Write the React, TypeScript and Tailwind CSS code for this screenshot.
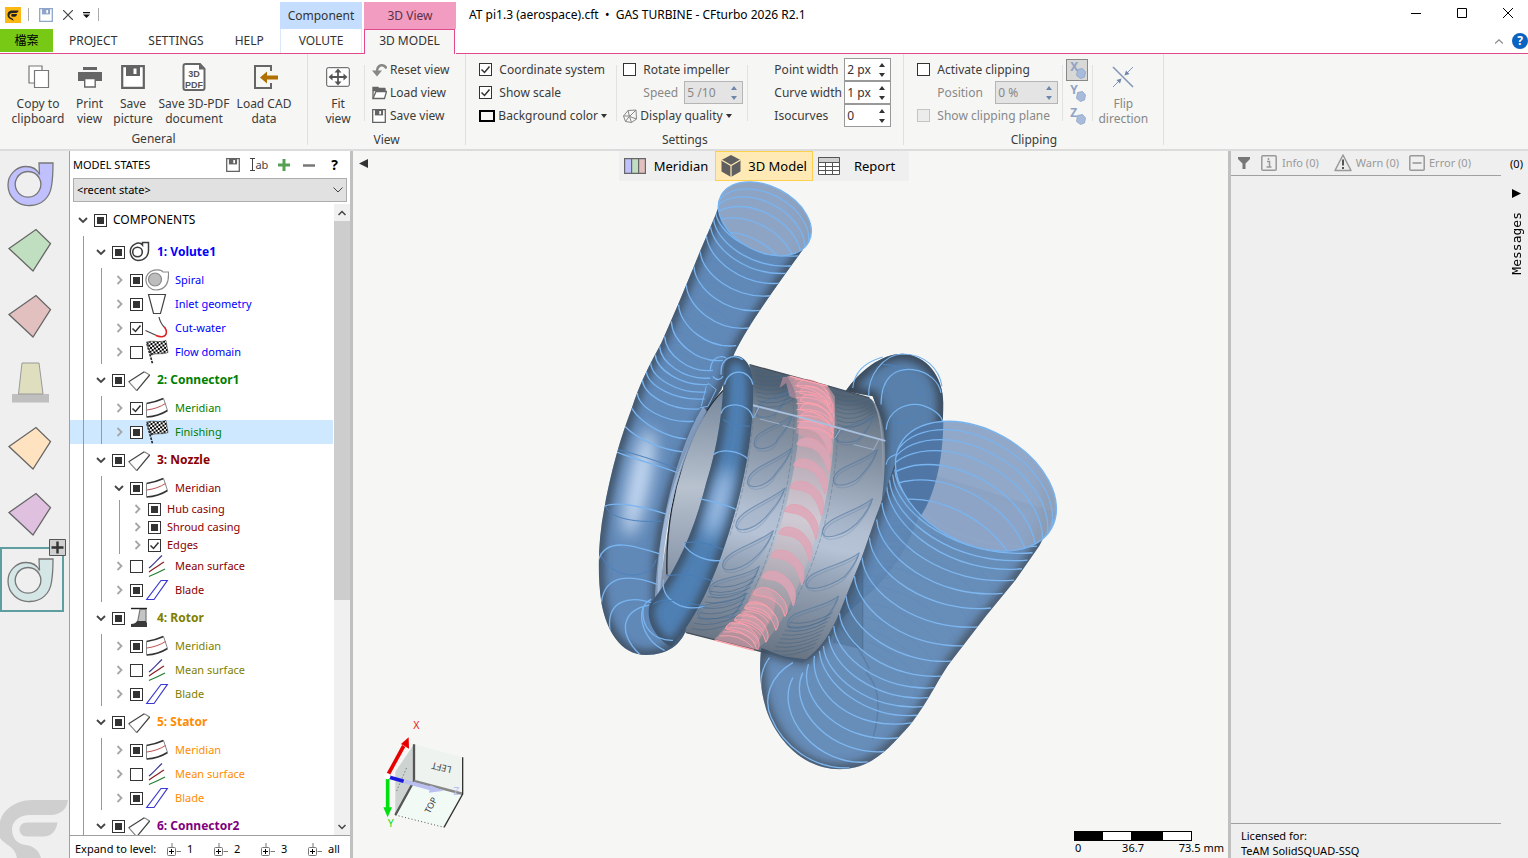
import type { ReactNode } from 'react'
import { clsx } from 'clsx'

type CheckState = 'on' | 'off' | 'mixed'
type IconName = 'volute' | 'kite' | 'rotor' | 'spiral' | 'inlet' | 'cutwater' | 'flag' | 'meridian' | 'mean' | 'blade'

interface TreeRow {
  level: 0 | 1 | 2 | 3
  label: string
  state: CheckState
  color: string
  icon?: IconName
  open?: boolean
  selected?: boolean
}

const rows: TreeRow[] = [
  { level: 0, label: 'COMPONENTS', state: 'mixed', color: 'text-black', open: true },
  { level: 1, label: '1: Volute1', state: 'mixed', color: 'text-[#0000ff]', icon: 'volute', open: true },
  { level: 2, label: 'Spiral', state: 'mixed', color: 'text-[#0000ff]', icon: 'spiral' },
  { level: 2, label: 'Inlet geometry', state: 'mixed', color: 'text-[#0000ff]', icon: 'inlet' },
  { level: 2, label: 'Cut-water', state: 'on', color: 'text-[#0000ff]', icon: 'cutwater' },
  { level: 2, label: 'Flow domain', state: 'off', color: 'text-[#0000ff]', icon: 'flag' },
  { level: 1, label: '2: Connector1', state: 'mixed', color: 'text-[#008000]', icon: 'kite', open: true },
  { level: 2, label: 'Meridian', state: 'on', color: 'text-[#008000]', icon: 'meridian' },
  { level: 2, label: 'Finishing', state: 'mixed', color: 'text-[#008000]', icon: 'flag', selected: true },
  { level: 1, label: '3: Nozzle', state: 'mixed', color: 'text-[#8b0000]', icon: 'kite', open: true },
  { level: 2, label: 'Meridian', state: 'mixed', color: 'text-[#8b0000]', icon: 'meridian', open: true },
  { level: 3, label: 'Hub casing', state: 'mixed', color: 'text-[#8b0000]' },
  { level: 3, label: 'Shroud casing', state: 'mixed', color: 'text-[#8b0000]' },
  { level: 3, label: 'Edges', state: 'on', color: 'text-[#8b0000]' },
  { level: 2, label: 'Mean surface', state: 'off', color: 'text-[#8b0000]', icon: 'mean' },
  { level: 2, label: 'Blade', state: 'mixed', color: 'text-[#8b0000]', icon: 'blade' },
  { level: 1, label: '4: Rotor', state: 'mixed', color: 'text-[#808000]', icon: 'rotor', open: true },
  { level: 2, label: 'Meridian', state: 'mixed', color: 'text-[#808000]', icon: 'meridian' },
  { level: 2, label: 'Mean surface', state: 'off', color: 'text-[#808000]', icon: 'mean' },
  { level: 2, label: 'Blade', state: 'mixed', color: 'text-[#808000]', icon: 'blade' },
  { level: 1, label: '5: Stator', state: 'mixed', color: 'text-[#ff8c00]', icon: 'kite', open: true },
  { level: 2, label: 'Meridian', state: 'mixed', color: 'text-[#ff8c00]', icon: 'meridian' },
  { level: 2, label: 'Mean surface', state: 'off', color: 'text-[#ff8c00]', icon: 'mean' },
  { level: 2, label: 'Blade', state: 'mixed', color: 'text-[#ff8c00]', icon: 'blade' },
  { level: 1, label: '6: Connector2', state: 'mixed', color: 'text-[#800080]', icon: 'kite', open: true }
]

/* ---------- icons ---------- */

function Floppy({ className, color = '#636363' }: { className?: string; color?: string }) {
  return (
    <svg viewBox="0 0 24 24" className={className}>
      <path d="M1.200 1.200h21.600v21.600H1.200z" fill="#fff" stroke={color} strokeWidth="2.200" />
      <path d="M5 1h14v10H5z" fill={color} />
      <path d="M12.500 3.500h3v5.500h-3z" fill="#fff" />
    </svg>
  )
}

function TreeIcon({ name }: { name: IconName }) {
  return (
    <svg viewBox="0 0 24 24" className="w-6 h-6" fill="none" stroke="#444" strokeWidth="1.2">
      {name === 'volute' && (
        <g stroke="#3c3c3c">
          <path d="M21.500 2.500v8c0 6-4.500 10-10.500 10A8.800 8.800 0 0 1 7.500 4.300C11 2.500 14 3 15.500 5V2.500z" strokeWidth="1.500" />
          <circle cx="10.500" cy="12" r="4.800" strokeWidth="1.600" />
        </g>
      )}
      {name === 'spiral' && (
        <g stroke="#8a8a8a">
          <path d="M23.500 4c.5 9-1.500 18-13 18A10 10 0 0 1 9 2.200C13 1.500 17 2 18 4z" />
          <circle cx="10" cy="11.500" r="6.500" fill="#bdbdbd" />
        </g>
      )}
      {name === 'inlet' && <path d="M3.500 2.500h17l-5 19h-7z" />}
      {name === 'cutwater' && (
        <g>
          <path d="M14 1c1 5 3 8 6 11M.5 14.500l11 5" />
          <path d="M19.500 11c3 4 2.500 8.500-1.500 9.500-2 .5-4.500 0-7-1" stroke="#e02020" strokeWidth="1.500" />
        </g>
      )}
      {name === 'flag' && (
        <g>
          <pattern id="checker" width="4" height="4" patternUnits="userSpaceOnUse" patternTransform="rotate(8)">
            <path d="M0 0h4v4H0z" fill="#fff" stroke="none" />
            <path d="M0 0h2v2H0zM2 2h2v2H2z" fill="#000" stroke="none" />
          </pattern>
          <path d="M2 4l5.500 19.500" stroke="#222" strokeDasharray="2.500 1" strokeWidth="1.600" />
          <path d="M1.500 2C8 0 14 3 21 .5l2 12c-6 2.500-11 0-17 2.500z" fill="url(#checker)" stroke="#333" strokeWidth=".6" />
        </g>
      )}
      {name === 'kite' && (
        <g>
          <path d="M17.300 3.700l5.400 3.300M9.700 22.700l-8-9" stroke="#888" />
          <path d="M1.700 13.700l15.600-10M22.700 7l-13 15.700" stroke="#444" />
        </g>
      )}
      {name === 'rotor' && (
        <g stroke="none">
          <path d="M4 2.500h16" stroke="#222" strokeWidth="1.400" />
          <path d="M13 3.500h6v13h-8.500z" fill="#c4c4c4" stroke="#777" />
          <path d="M10 15h9v1.500h1V21H4v-3c3 0 5-1 6-3z" fill="#3a3a3a" />
        </g>
      )}
      {name === 'meridian' && (
        <g>
          <path d="M1.500 7.500C8 6.500 14 4.500 18.500 2.500" stroke="#333" strokeWidth="1.600" />
          <path d="M1.500 21C9 20.500 17 18 22.500 14.500" stroke="#333" strokeWidth="1.600" />
          <path d="M1.500 7.500V21M18.500 2.500l4 12" stroke="#888" strokeWidth="1" />
          <path d="M2 14c7-1 13-3 18.500-6.500" stroke="#c05050" strokeWidth="1" />
        </g>
      )}
      {name === 'mean' && (
        <g strokeWidth="1.200">
          <path d="M4 14C9 10 13 5 17 1.500" stroke="#3a3a9a" />
          <path d="M4 18c6-4 10-7 15-10" stroke="#8b2020" />
          <path d="M4 22.500C10 20 14 18 20 15" stroke="#208030" />
        </g>
      )}
      {name === 'blade' && <path d="M1.700 21.500H9L22.300 2.500H16z" stroke="#3a3ad0" strokeWidth="1.200" />}
    </svg>
  )
}

function Volute({ fill }: { fill: string }) {
  return (
    <svg viewBox="0 0 50 50" className="w-[50px] h-[50px]" stroke="#777" strokeWidth="1.300">
      <path
        fillRule="evenodd"
        fill={fill}
        d="M34 4h14c0 8 0 14-1.500 23C45 38 37 46.500 25 46.500A20.500 20.500 0 0 1 3 26C3 15 12 7.500 21 7.500c6 0 11 2.500 13.500 8zM23 12.500a12.800 12.800 0 1 0 .1 0z"
      />
    </svg>
  )
}

function Kite({ fill }: { fill: string }) {
  return (
    <svg viewBox="0 0 50 50" className="w-[50px] h-[50px]" stroke="#666" strokeWidth="1.300">
      <path d="M4 23.500L31 4.500l14.500 14L28 46z" fill={fill} />
    </svg>
  )
}

/* ---------- small controls ---------- */

function Check({ state, label, disabled, id }: { state: CheckState; label?: string; disabled?: boolean; id?: string }) {
  return (
    <span className="relative block w-[13px] h-[13px] shrink-0">
      <input
        id={id}
        type="checkbox"
        aria-label={label}
        defaultChecked={state !== 'off'}
        disabled={disabled}
        className={clsx(
          'block appearance-none w-[13px] h-[13px] border',
          disabled ? 'border-[#c4c4c4] bg-[#ececec]' : 'border-[#333] bg-white'
        )}
      />
      {state === 'mixed' && <span className="absolute inset-[3px] bg-[#333] pointer-events-none" />}
      {state === 'on' && (
        <svg viewBox="0 0 13 13" className="absolute inset-0 pointer-events-none" fill="none" stroke="#333" strokeWidth="1.500">
          <path d="M2.500 6.500l3 3 5-6" />
        </svg>
      )}
    </span>
  )
}

function CheckRow({ id, label, checked, disabled }: { id: string; label: string; checked?: boolean; disabled?: boolean }) {
  return (
    <div className="flex items-center gap-[7px] h-[23px]">
      <Check id={id} state={checked ? 'on' : 'off'} disabled={disabled} />
      <label htmlFor={id} className={clsx('whitespace-nowrap', disabled && 'text-[#888]')}>{label}</label>
    </div>
  )
}

function Spin({ id, value, width, disabled }: { id: string; value: string; width: string; disabled?: boolean }) {
  return (
    <span
      className={clsx(
        'flex items-center h-[23px] border',
        width,
        disabled ? 'border-[#b5b5b5] bg-[#e4e4e4] text-[#888]' : 'border-[#999] bg-white text-[#333]'
      )}
    >
      <input id={id} defaultValue={value} disabled={disabled} className="min-w-0 flex-1 pl-[2px] bg-transparent outline-none" />
      <span className={clsx('flex flex-col gap-[6px] pr-[5px]', disabled ? 'text-[#6f87ab]' : 'text-[#333]')}>
        <button aria-label={`Increase ${id}`} className="block" disabled={disabled}>
          <svg viewBox="0 0 6 4" className="w-[6px] h-1"><path d="M0 4l3-4 3 4z" fill="currentColor" /></svg>
        </button>
        <button aria-label={`Decrease ${id}`} className="block" disabled={disabled}>
          <svg viewBox="0 0 6 4" className="w-[6px] h-1"><path d="M0 0l3 4 3-4z" fill="currentColor" /></svg>
        </button>
      </span>
    </span>
  )
}

function BigButton({ icon, lines, width, disabled }: { icon: ReactNode; lines: string[]; width: string; disabled?: boolean }) {
  return (
    <button className={clsx('flex flex-col items-center', width, disabled && 'text-[#888]')}>
      <span className="flex items-center justify-center h-[38px]">{icon}</span>
      {lines.map(line => (
        <span key={line} className="leading-[15px] whitespace-nowrap">{line}</span>
      ))}
    </button>
  )
}

function SmallButton({ icon, label, menu }: { icon: ReactNode; label: string; menu?: boolean }) {
  return (
    <button className="flex items-center gap-[3px] h-[23px] whitespace-nowrap">
      {icon}
      {label}
      {menu && <svg viewBox="0 0 6 4" className="w-[6px] h-1"><path d="M0 0l3 4 3-4z" fill="#333" /></svg>}
    </button>
  )
}

function Group({ title, children }: { title: string; children: ReactNode }) {
  return (
    <section className="flex flex-col pt-1 border-r border-[#e0e0e0] mb-1">
      <div className="flex h-[69px]">{children}</div>
      <h2 className="mt-[3px] text-center leading-5">{title}</h2>
    </section>
  )
}

const Divider = () => <span className="w-px h-[56px] mt-[7px] bg-[#e2e2e2]" />

/* ---------- header ---------- */

function Header() {
  return (
    <header className="flex bg-white text-[#333]">
      <div className="flex flex-col w-[280px] border-b border-[#e0498c]">
        <div className="flex items-center h-[29px] pl-[5px]">
          <svg viewBox="0 0 16 16" className="w-4 h-4">
            <path d="M0 0h16v16H0z" fill="#fdb813" />
            <path d="M13.500 3.500H7.500C4 3.500 2.500 5.500 2.500 8c0 2.500 2 4 4 4.500l2 1.500c0-1.500-.5-2.500-2-3C5 10.500 4.500 9.500 4.500 8.500 4.500 7 5.500 6 7.500 6H11c1.500 0 2.300-1 2.500-2.500z" fill="#222" />
            <path d="M12 7H7.500c-1.800 0-1.800 2.700 0 2.700h2C11 9.700 11.800 8.500 12 7z" fill="#222" />
          </svg>
          <span className="w-px h-[13px] ml-[7px] bg-[#aaa]" />
          <button aria-label="Save" className="ml-[10px]"><Floppy className="w-[14px] h-[14px]" color="#8ea4c8" /></button>
          <button aria-label="Discard" className="ml-[10px]">
            <svg viewBox="0 0 10 10" className="w-[10px] h-[10px]" stroke="#444" strokeWidth="1.200"><path d="M0 0l10 10M10 0L0 10" /></svg>
          </button>
          <button aria-label="Customize quick access" className="ml-[10px]">
            <svg viewBox="0 0 7 6" className="w-[7px] h-[6px]"><path d="M0 0h7v1.200H0zM0 2.500h7L3.500 6z" fill="#111" /></svg>
          </button>
          <span className="w-px h-[13px] ml-2 bg-[#aaa]" />
        </div>
        <nav className="flex h-6">
          <button className="w-[53px] h-[23px] shrink-0 bg-[#77c916] text-black">檔案</button>
          <button className="pl-4 pr-[15px]">PROJECT</button>
          <button className="px-4">SETTINGS</button>
          <button className="pl-[15px]">HELP</button>
        </nav>
      </div>

      <div className="flex flex-col w-[84px] pt-[2px] border-b border-[#e0498c]">
        <div className="flex items-center justify-center h-[27px] mr-[2px] bg-[#c5deff]">Component</div>
        <button className="h-6 mr-[2px] border-x border-[#dbe8fa]">VOLUTE</button>
      </div>

      <div className="flex flex-col w-[92px] pt-[2px]">
        <div className="flex items-center justify-center h-[27px] bg-[#f19cc0] text-[#5c3046]">3D View</div>
        <button className="h-[25px] mr-px pb-[2px] border-x border-t border-[#e0498c] bg-[#f6f6f4]">3D MODEL</button>
      </div>

      <div className="flex flex-col flex-1 border-b border-[#e0498c]">
        <div className="flex items-center h-[29px] pl-[13px]">
          <h1 className="text-black whitespace-nowrap">AT pi1.3 (aerospace).cft&nbsp; • &nbsp;GAS TURBINE - CFturbo 2026 R2.1</h1>
          <div className="flex items-center gap-9 ml-auto pr-[15px] mb-[3px]">
            <button aria-label="Minimize"><svg viewBox="0 0 10 10" className="w-[10px] h-[10px]"><path d="M0 5h10v1H0z" fill="#000" /></svg></button>
            <button aria-label="Maximize"><svg viewBox="0 0 10 10" className="w-[10px] h-[10px]" fill="none" stroke="#000"><path d="M.5.5h9v9h-9z" /></svg></button>
            <button aria-label="Close"><svg viewBox="0 0 10 10" className="w-[10px] h-[10px]" stroke="#000"><path d="M0 0l10 10M10 0L0 10" /></svg></button>
          </div>
        </div>
        <div className="flex items-center justify-end gap-[9px] h-6">
          <button aria-label="Collapse ribbon">
            <svg viewBox="0 0 8 5" className="w-2 h-[5px]" fill="none" stroke="#888" strokeWidth="1.200"><path d="M0 4.500L4 .8l4 3.700" /></svg>
          </button>
          <button aria-label="Help" className="flex items-center justify-center w-4 h-4 rounded-full bg-[#0a63c0] text-white font-bold leading-4">?</button>
        </div>
      </div>
    </header>
  )
}

/* ---------- ribbon ---------- */

function AxisButton({ axis, active }: { axis: string; active?: boolean }) {
  return (
    <button
      aria-label={`Clip ${axis}`}
      className={clsx('relative w-[22px] h-[22px] mb-px border', active ? 'border-[#888] bg-[#d8d8d6]' : 'border-transparent')}
    >
      <span className="absolute left-[3px] top-0 text-[12px] leading-[14px] font-bold text-[#90a3c4]">{axis}</span>
      <svg viewBox="0 0 20 20" className="w-5 h-5">
        <path d="M10.500 9.500l5-1 3 3.500-1 5-4 1.500-4-3z" fill="#a9bbdb" stroke="#8fa3c8" strokeWidth=".8" />
      </svg>
    </button>
  )
}

function Ribbon() {
  return (
    <div className="flex shrink-0 h-[97px] bg-[#f6f6f4] border-b-2 border-[#dcdcdc] text-[#3b3b3b]">
      <Group title="General">
        <div className="flex pl-2 pr-3">
          <BigButton width="w-[60px]" lines={['Copy to', 'clipboard']} icon={
            <svg viewBox="0 0 22 24" className="w-[22px] h-6 ml-[2px]" fill="#fff" stroke="#777" strokeWidth="1.200"><path d="M1 1h13v17H1z" /><path d="M6.500 5.500h14v17h-14z" /></svg>
          } />
          <BigButton width="w-[43px]" lines={['Print', 'view']} icon={
            <svg viewBox="0 0 24 22" className="w-6 h-[22px]"><path d="M5 1h14v3H5zM0 6h24v9H0z" fill="#666" /><path d="M6.700 12.500h10.500v8.500H6.700z" fill="#fff" stroke="#666" strokeWidth="1.400" /></svg>
          } />
          <BigButton width="w-11" lines={['Save', 'picture']} icon={<Floppy className="w-6 h-6" />} />
          <BigButton width="w-[78px]" lines={['Save 3D-PDF', 'document']} icon={
            <svg viewBox="0 0 24 28" className="w-6 h-7 font-['Liberation_Sans',sans-serif]">
              <path d="M1.500 3q0-2 2-2H18l4.500 5v19q0 2-2 2h-17q-2 0-2-2z" fill="#fff" stroke="#666" strokeWidth="2" />
              <path d="M17 1v5.500h5" fill="#666" />
              <text x="12" y="13.500" fontSize="9" fontWeight="bold" textAnchor="middle" fill="#555">3D</text>
              <text x="12" y="24.500" fontSize="9" fontWeight="bold" textAnchor="middle" fill="#555">PDF</text>
            </svg>
          } />
          <BigButton width="w-[62px]" lines={['Load CAD', 'data']} icon={
            <svg viewBox="0 0 24 24" className="w-6 h-6 ml-1"><path d="M17 6V1H1v22h16v-5" fill="none" stroke="#666" strokeWidth="2" /><path d="M6 12.500l7-6v4h11v4H13v4z" fill="#b07000" /></svg>
          } />
        </div>
      </Group>

      <Group title="View">
        <div className="flex pl-1">
          <BigButton width="w-[52px]" lines={['Fit', 'view']} icon={
            <svg viewBox="0 0 24 20" className="w-6 h-5" fill="none" stroke="#555"><rect x=".7" y=".7" width="22.600" height="18.600" rx="1.500" fill="#fff" /><path d="M12 4v12M4.500 10h15" strokeWidth="1.800" /><path d="M12 1.500l3.500 4h-7zM12 18.500l3.500-4h-7zM2.500 10l4-3.500v7zM21.500 10l-4-3.500v7z" fill="#555" stroke="none" /></svg>
          } />
          <Divider />
          <div className="pl-[7px] pr-4">
            <SmallButton label="Reset view" icon={
              <svg viewBox="0 0 15 14" className="w-[15px] h-[14px]"><path d="M14.500 5.500C12.500.5 5.500 1 5 8v2" fill="none" stroke="#888" strokeWidth="2.500" /><path d="M0 7.500h10L5 13.500z" fill="#888" /></svg>
            } />
            <SmallButton label="Load view" icon={
              <svg viewBox="0 0 15 14" className="w-[15px] h-[14px]" fill="none" stroke="#666" strokeWidth="1.300"><path d="M1 12.500v-11h5l1 1.500h6v2" /><path d="M1.500 2.500h11v2h-11z" fill="#666" /><path d="M1 12.500l3-7h10.500l-2 7z" fill="#fff" /></svg>
            } />
            <SmallButton label="Save view" icon={<Floppy className="w-[14px] h-[14px] mr-px" />} />
          </div>
        </div>
      </Group>

      <Group title="Settings">
        <div className="pl-[13px] w-[150px]">
          <CheckRow id="coords" label="Coordinate system" checked />
          <CheckRow id="scale" label="Show scale" checked />
          <SmallButton menu label="Background color" icon={<span className="w-4 h-3 border-2 border-black bg-[#f6f6f4]" />} />
        </div>
        <Divider />
        <div className="pl-[6px] w-[130px]">
          <CheckRow id="rotate" label="Rotate impeller" />
          <div className="flex items-center justify-between pl-5 pr-1 h-[23px]">
            <label htmlFor="speed" className="text-[#888]">Speed</label>
            <Spin id="speed" value="5 /10" width="w-[59px]" disabled />
          </div>
          <SmallButton menu label="Display quality" icon={
            <svg viewBox="0 0 14 14" className="w-[14px] h-[14px]" fill="none" stroke="#888"><path d="M.5 7L5 1.500l8-.5.5 9-5 3.500-6-1zM5 1.500l1.500 6 7 2.500M.5 7h6l-4 5.500M13 1L6.500 7.500l2 6" /></svg>
          } />
        </div>
        <Divider />
        <div className="pl-[26px] pr-3">
          {[
            ['Point width', '2 px'],
            ['Curve width', '1 px'],
            ['Isocurves', '0']
          ].map(([label, value]) => (
            <div key={label} className="flex items-center h-[23px]">
              <label htmlFor={label} className="w-[70px] whitespace-nowrap">{label}</label>
              <Spin id={label} value={value} width="w-[47px]" />
            </div>
          ))}
        </div>
      </Group>

      <Group title="Clipping">
        <div className="pl-[13px] w-[158px]">
          <CheckRow id="clip" label="Activate clipping" />
          <div className="flex items-center justify-between pl-5 pr-1 h-[23px]">
            <label htmlFor="position" className="text-[#888]">Position</label>
            <Spin id="position" value="0 %" width="w-[63px]" disabled />
          </div>
          <CheckRow id="plane" label="Show clipping plane" disabled />
        </div>
        <Divider />
        <div className="flex flex-col pl-[3px] pr-1 pt-px">
          <AxisButton axis="X" active />
          <AxisButton axis="Y" />
          <AxisButton axis="Z" />
        </div>
        <Divider />
        <BigButton disabled width="w-[60px]" lines={['Flip', 'direction']} icon={
          <svg viewBox="0 0 22 22" className="w-[22px] h-[22px]" stroke="#8296b8" fill="#6f87ab"><path d="M1 1l20 20" strokeWidth="1.600" /><path d="M21 1l-6 6M1 21l6-6" /><path d="M12.500 9.500l1.500-5 3.500 3.500zM9.500 12.500l-1.500 5L4.500 14z" stroke="none" /></svg>
        } />
        <span className="w-[10px]" />
      </Group>
    </div>
  )
}

/* ---------- left side ---------- */

function ComponentBar() {
  const cell = 'flex items-center justify-center w-[60px] h-[66px] shrink-0'
  return (
    <aside className="relative flex flex-col w-[70px] shrink-0 bg-[#efefef] border-r border-[#a0a0a0] overflow-hidden">
      <button aria-label="Volute" className={cell}><Volute fill="#c0c0ff" /></button>
      <button aria-label="Connector" className={cell}><Kite fill="#c0dfc0" /></button>
      <button aria-label="Nozzle" className={cell}><Kite fill="#e2c0c0" /></button>
      <button aria-label="Rotor" className={cell}>
        <svg viewBox="0 0 50 50" className="w-[50px] h-[50px]"><path d="M7 37h37v8.500H7z" fill="#bfbfbf" /><path d="M17 6h17l4 31H13.500z" fill="#dfdfc0" stroke="#999" /></svg>
      </button>
      <button aria-label="Stator" className={cell}><Kite fill="#ffe2c0" /></button>
      <button aria-label="Connector 2" className={cell}><Kite fill="#dfc0df" /></button>
      <button aria-label="Add volute" className="relative flex items-center pl-[3px] w-16 h-[65px] shrink-0 border-2 border-[#5f9ea0]">
        <Volute fill="#d5e6e6" />
        <svg viewBox="0 0 17 17" className="absolute -top-[10px] -right-1 w-[17px] h-[17px]">
          <path d="M.5.5h16v16H.5z" fill="#d0d0d0" stroke="#555" /><path d="M8.500 2.500v12M2.500 8.500h12" stroke="#333" strokeWidth="2.400" />
        </svg>
      </button>
      <svg viewBox="0 0 70 58" className="w-[70px] h-[58px] mt-auto shrink-0" fill="#cfcfcf">
        <path d="M68 0H33C12 0 0 14 0 24v14c6 8 15 8 17 20h24c-2-8-8-12-15-13-8-1-14-6-14-16 0-8 8-14 18-14h20C62 15 67 8 68 0z" />
        <path d="M57.500 22.500H27c-10 0-10 14 0 14h16c9 0 13-6 14.500-14z" />
      </svg>
    </aside>
  )
}

const rowHeights = ['h-8', 'h-8', 'h-6', 'h-[18px]']

function Row({ row, index }: { row: TreeRow; index: number }) {
  return (
    <li
      role="treeitem"
      aria-level={row.level + 1}
      className={clsx('flex items-center pl-1 shrink-0', rowHeights[row.level], row.selected && 'bg-[#cde8ff]')}
    >
      {Array.from({ length: row.level }, (_, i) => (
        <span key={i} className="w-[9px] ml-[9px] h-full border-l border-[#999] shrink-0" />
      ))}
      <button aria-label={`Toggle ${row.label}`} className="flex items-center justify-center w-[18px] h-full shrink-0">
        <svg viewBox="0 0 10 10" className="w-[10px] h-[10px]" fill="none" strokeWidth="1.800">
          {row.open ? <path d="M1 3l4 4 4-4" stroke="#444" /> : <path d="M3.500 1l4 4-4 4" stroke="#a6a6a6" />}
        </svg>
      </button>
      <span className="ml-[2px]"><Check id={`node-${index}`} state={row.state} /></span>
      {row.icon && <span className="ml-[2px] shrink-0"><TreeIcon name={row.icon} /></span>}
      <label
        htmlFor={`node-${index}`}
        className={clsx('ml-[6px] whitespace-nowrap', row.color, row.level === 1 ? 'font-bold text-[12px]' : row.level === 0 ? 'text-[12px]' : 'text-[11px]')}
      >
        {row.label}
      </label>
    </li>
  )
}

function ModelTree() {
  return (
    <div className="flex flex-col w-[280px] shrink-0 bg-white text-black text-[11px]">
      <div className="flex items-center h-[27px] pl-[3px] pr-3 shrink-0">
        <h2>MODEL STATES</h2>
        <div className="flex items-center ml-auto">
          <button aria-label="Save state"><Floppy className="w-[14px] h-[14px]" /></button>
          <button aria-label="Rename state" className="flex items-center ml-[10px] text-[#444]">
            <svg viewBox="0 0 5 13" className="w-[5px] h-[13px]" fill="none" stroke="#444"><path d="M0 .5h5M0 12.500h5M2.500.5v12" /></svg>ab
          </button>
          <button aria-label="Add state" className="ml-[10px]">
            <svg viewBox="0 0 12 12" className="w-3 h-3" stroke="#55a055" strokeWidth="3"><path d="M6 0v12M0 6h12" /></svg>
          </button>
          <button aria-label="Remove state" className="ml-[13px]">
            <svg viewBox="0 0 12 12" className="w-3 h-3" stroke="#777" strokeWidth="2.500"><path d="M0 6.500h12" /></svg>
          </button>
          <button aria-label="Help" className="ml-4 text-[14px] font-bold">?</button>
        </div>
      </div>
      <div className="relative mx-[3px] shrink-0">
        <select aria-label="Model state" className="block appearance-none w-full h-6 pl-[3px] bg-[#e1e1e1] border border-[#adadad]">
          <option>&lt;recent state&gt;</option>
        </select>
        <svg viewBox="0 0 10 6" className="absolute right-1 top-[9px] w-[10px] h-[6px] pointer-events-none" fill="none" stroke="#444"><path d="M.5.5L5 5 9.500.5" /></svg>
      </div>
      <div className="flex flex-1 min-h-0 mt-[2px]">
        <ul role="tree" className="flex flex-col flex-1 min-w-0 overflow-hidden">
          {rows.map((row, i) => <Row key={i} row={row} index={i} />)}
        </ul>
        <div className="flex flex-col items-center w-4 ml-px bg-[#f0f0f0]">
          <svg viewBox="0 0 8 17" className="w-2 h-[17px] shrink-0" fill="none" stroke="#444" strokeWidth="1.500"><path d="M.5 11L4 7.500 7.500 11" /></svg>
          <div className="w-full h-[60%] bg-[#cdcdcd]" />
          <svg viewBox="0 0 8 17" className="w-2 h-[17px] mt-auto shrink-0" fill="none" stroke="#444" strokeWidth="1.500"><path d="M.5 7L4 10.500 7.500 7" /></svg>
        </div>
      </div>
      <div className="flex items-center h-[23px] pl-[5px] pt-1 shrink-0 border-t border-[#a0a0a0]">
        <span className="w-[92px] shrink-0 whitespace-nowrap">Expand to level:</span>
        {['1', '2', '3', 'all'].map(level => (
          <button key={level} className="flex items-center gap-[6px] w-[47px] shrink-0">
            <svg viewBox="0 0 14 13" className="w-[14px] h-[13px]" fill="none" stroke="#777"><path d="M5 0v4M9.500 8.500H14" /><rect x=".5" y="4.500" width="8" height="8" rx="1" fill="#fff" /><path d="M2 8.500h5M4.500 6v5" stroke="#000" /></svg>
            {level}
          </button>
        ))}
      </div>
    </div>
  )
}

/* ---------- 3D view ---------- */

// end points of the visible cross section arcs, from outlet to tongue
const leftRings = [
  [378, -385, 628, -252], [372, -365, 613, -222], [362, -345, 600, -200], [350, -315, 577, -170], [332, -265, 545, -132],
  [313, -220, 512, -88], [290, -165, 478, -35], [267, -105, 440, 18], [245, -55, 400, 62], [225, -10, 370, 92], [210, 20, 362, 115],
  [197, 45, 357, 134], [183, 70, 350, 157], [170, 95, 345, 178], [158, 120, 330, 208], [143, 160, 312, 245]
]

const rightRings = [
  [466, 390, 893, 620], [460, 405, 880, 640], [450, 420, 865, 662], [442, 440, 848, 688], [428, 490, 825, 722], [412, 540, 790, 762],
  [390, 595, 755, 806], [368, 655, 725, 862], [345, 710, 690, 918], [320, 770, 650, 965], [300, 820, 620, 1010], [283, 860, 590, 1045],
  [268, 890, 570, 1075], [252, 920, 550, 1102], [240, 935, 535, 1128]
]

// front half: steep at the left rim, flat towards the right rim
const nearArc = ([x1, y1, x2, y2]: number[]) => {
  const dx = x2 - x1
  const dy = y2 - y1
  return `M${x1} ${y1}C${x1 + dx * 0.02} ${y1 + dy * 0.5} ${x1 + dx * 0.48} ${y2 + dy * 0.08} ${x2} ${y2}`
}

const farArc = ([x1, y1, x2, y2]: number[]) => {
  const angle = (Math.atan2(y2 - y1, x2 - x1) * 180) / Math.PI
  return `M${x1} ${y1}A10 5 ${angle.toFixed(1)} 0 1 ${x2} ${y2}`
}

// [tip x, tip y, nose x, nose y]
const vanes = [
  [605, 145, 505, 225], [610, 225, 500, 320], [607, 325, 480, 435], [587, 445, 445, 565], [552, 573, 405, 685], [510, 680, 365, 760], [470, 760, 330, 830],
  [855, 225, 745, 300], [865, 330, 738, 430], [850, 477, 705, 585], [810, 640, 655, 740], [748, 770, 600, 860]
]

const vanePath = ([tx, ty, nx, ny]: number[]) =>
  `M${tx} ${ty}C${tx - 45} ${ty + 40} ${nx - 10} ${ny - 50} ${nx - 6} ${ny - 4}C${nx} ${ny + 16} ${nx + 55} ${ny + 8} ${tx - 45} ${ty + 72}Q${tx - 15} ${ty + 40} ${tx} ${ty}z`

const rotorBlades = [
  [625, 262], [622, 315], [612, 378], [602, 445], [585, 515], [567, 583], [543, 652], [517, 715]
]
const edgeBlades = [
  [622, 140], [630, 160], [632, 184], [632, 210], [630, 236], [492, 765], [465, 807], [435, 843], [408, 868]
]

const bladePath = ([x, y]: number[], reach = 85) =>
  `M${x} ${y}C${x + 5} ${y - 24} ${x + 40} ${y - 26} ${x + 65} ${y - 8}C${x + 92} ${y + 12} ${x + 112} ${y + 45} ${x + 94} ${y + reach}C${x + 86} ${y + reach - 30} ${x + 76} ${y + 28} ${x + 52} ${y + 14}C${x + 36} ${y + 4} ${x + 14} ${y + 6} ${x} ${y}z`

const leftTube =
  'M387-400C378-370 345-300 315-225L265-105 215 10C180 75 150 130 125 210 95 290 70 370 45 500 25 600 22 700 35 790 50 870 90 947 170 947 235 947 275 915 290 870L205 800C198 680 215 540 265 400 300 300 340 225 395 150L435 40C480-50 560-160 640-270L665-325z'
const frontRing =
  'M402 100C402 65 415 48 438 48 470 50 490 85 491 140 492 290 465 450 395 650 350 775 300 860 245 925 205 900 165 850 180 795 260 700 315 570 350 430 385 320 402 200 402 100z'
const backRing =
  'M318 155C360 95 425 42 490 42 560 45 612 110 612 190 612 330 580 440 500 620 460 690 420 740 370 780L270 870C380 640 425 500 425 240L400 170z'
const bigTube =
  'M467 370C455 410 430 480 410 530L365 660 300 820C275 880 245 925 200 960L130 950 65 925C58 1000 62 1050 80 1110 110 1200 190 1290 300 1290 400 1290 450 1225 510 1160 570 1085 600 1010 640 960L740 830 830 720 900 620 952 520z'
const bodyPath =
  'M480 75L720 140 840 175C880 200 892 300 886 380 882 480 865 570 845 640 820 720 775 810 740 870 715 915 680 950 640 970L490 930 280 878C320 800 370 660 410 510 450 370 480 240 480 75z'

interface TubeProps {
  id: string
  d: string
  fill: string
  edge?: number
  opacity?: number
  children?: ReactNode
}

// silhouette with darkened rims, children are clipped to it
function ShadedTube({ id, d, fill, edge = 26, opacity = 1, children }: TubeProps) {
  return (
    <g opacity={opacity}>
      <clipPath id={id}><path d={d} /></clipPath>
      <path d={d} fill={fill} />
      <g clipPath={`url(#${id})`}>
        <path d={d} fill="none" stroke="#37424f" strokeWidth={edge} filter="url(#soft)" />
        {children}
      </g>
    </g>
  )
}

function ModelDrawing() {
  return (
    <svg viewBox="353 152 876 706" className="absolute inset-0 w-full h-full" fill="none" role="img" aria-label="3D model of the turbine">
      <defs>
        <filter id="soft" x="-20%" y="-20%" width="140%" height="140%"><feGaussianBlur stdDeviation="14" /></filter>
        <filter id="glow" x="-200%" y="-50%" width="500%" height="200%"><feGaussianBlur stdDeviation="24" /></filter>
        <linearGradient id="body" gradientUnits="userSpaceOnUse" x1="650" y1="110" x2="480" y2="940">
          <stop offset="0" stopColor="#5a6977" />
          <stop offset=".25" stopColor="#8491a2" />
          <stop offset=".5" stopColor="#b2bfd2" />
          <stop offset=".58" stopColor="#b6c3d6" />
          <stop offset=".75" stopColor="#8f9cae" />
          <stop offset="1" stopColor="#667280" />
        </linearGradient>
        <linearGradient id="rotorBand" gradientUnits="userSpaceOnUse" x1="650" y1="110" x2="480" y2="940">
          <stop offset="0" stopColor="#a58a96" />
          <stop offset=".5" stopColor="#d6ccd4" />
          <stop offset="1" stopColor="#85818a" />
        </linearGradient>
        <linearGradient id="disk" gradientUnits="userSpaceOnUse" x1="300" y1="150" x2="270" y2="800">
          <stop offset="0" stopColor="#76879b" />
          <stop offset=".45" stopColor="#b8c2cf" />
          <stop offset="1" stopColor="#76859a" />
        </linearGradient>
        <clipPath id="leftMouth"><ellipse cx="526" cy="-363" rx="149" ry="98" transform="rotate(27.700 526 -363)" /></clipPath>
        <clipPath id="rightMouth"><ellipse cx="710" cy="440" rx="260" ry="170" transform="rotate(29 710 440)" /></clipPath>
        <clipPath id="bodyClip"><path d={bodyPath} /></clipPath>
      </defs>

      {/* rear ring of the right volute */}
      <g transform="translate(740 340) scale(.3333)">
        <ShadedTube id="backRing" d={backRing} fill="#5880ab" edge={34}>
          <path d="M400 690C420 620 460 590 500 600 500 650 430 700 395 760z" fill="#a9bfdd" opacity=".7" filter="url(#soft)" />
          <path d="M430 75C500 70 560 150 545 200 535 240 500 255 460 250" stroke="#4c83bd" strokeWidth="3" />
        </ShadedTube>
        <g stroke="#78b4f0" strokeWidth="3.500">
          <path d="M340 145C345 100 370 70 430 52M388 170C385 110 430 45 490 43 560 43 600 90 608 140M425 195C425 110 470 85 520 90 570 95 600 130 605 160M440 270C445 210 500 190 540 195 580 205 605 225 610 245M440 375C445 345 470 350 475 340" />
        </g>
        <path d="M420 505q50 10 100 5M420 540q50 5 100 5M400 620q60-30 100-10M380 655q60 15 100 10M380 705q50 15 70 10M420 620l-80 160" stroke="#33506e" strokeWidth="3" opacity=".7" />
      </g>

      {/* casing with vanes and rotor */}
      <g transform="translate(590 340) scale(.3333)">
        <path d={bodyPath} fill="url(#body)" />
        <g clipPath="url(#bodyClip)">
          <path d="M480 75l240 65 160 45v60q-60-50-160-60L485 150z" fill="#3f5266" opacity=".5" filter="url(#soft)" />
          <path d="M590 105C645 180 632 300 605 430 580 560 530 690 490 760 460 820 420 870 375 900L495 935C560 890 600 810 650 680 700 540 740 400 736 170L715 138z" fill="url(#rotorBand)" opacity=".85" />
          <g stroke="#4d759f" strokeWidth="3.500">
            {vanes.map(v => <path key={v.join()} d={vanePath(v)} fill="#64809f" fillOpacity=".2" opacity=".6" />)}
            {vanes.map(v => <path key={v.join()} d={vanePath([v[0] - 3, v[1] + 10, v[2] + 4, v[3] + 8])} opacity=".25" />)}
          </g>
          <g stroke="#3f6285" strokeWidth="3" opacity=".5">
            {[0, 1, 2, 3, 4, 5, 6, 7, 8].map(i => (
              <path key={i} d={`M${490 + i * 2} ${92 + i * 13}q60 ${14 + i} 115 ${-i * 3}M${735 + i} ${150 + i * 13}q50 ${18 + i} 110 ${-i * 3}M${370 - i * 8} ${740 + i * 16}q60 14 130-${30 - i}M${600 - i * 7} ${850 + i * 12}q60 10 130-${30 - i}`} />
            ))}
          </g>
          <path d="M606 140C630 300 590 560 470 800M745 260C740 450 700 650 590 830M490 240C480 380 450 500 420 590" stroke="#56697d" strokeWidth="2" strokeDasharray="14 5" opacity=".6" />
          <path d="M850 180q35 60 30 220" stroke="#8c99aa" strokeWidth="5" />
        </g>
        <path d="M600 112L715 142 735 190 738 250 728 300 726 350 710 330 640 290 620 280 625 180 600 170 590 130 570 145 580 112z" fill="#dd9dac" opacity=".5" />
        <path d="M375 900L420 850 450 850 490 750 540 750 560 780 550 830 520 880 495 932z" fill="#dd9dac" opacity=".5" />
        <g fill="#e0a5b6" fillOpacity=".8" stroke="#e3a0b0" strokeWidth="2.500">
          {rotorBlades.map(b => <path key={b.join()} d={bladePath(b)} />)}
        </g>
        <g fill="#e8a6b6" fillOpacity=".35" stroke="#ff9dab" strokeWidth="3">
          {edgeBlades.map(b => <path key={b.join()} d={bladePath(b, b[1] > 700 ? 66 : 60)} />)}
        </g>
        <g stroke="#ffa3ad" strokeWidth="2.500">
          {[0, 1, 2, 3, 4, 5, 6, 7, 8].map(i => (
            <path key={i} d={`M${616 + i} ${120 + i * 18}q80-6 ${102 + i} ${42 - i}M${390 + i * 11} ${890 - i * 12}q60-8 ${100 - i * 3} 34`} />
          ))}
        </g>
        <path d="M490 197L615 228 888 304" stroke="#a9c0de" strokeWidth="6" />
        <path d="M510 200l-18 35M755 265l-18 30M868 300l-15 30-60-15M510 238l60 15M580 258l40 10" stroke="#9db1cc" strokeWidth="3" />
        <path d="M480 75L720 140 840 175M290 880L490 930 640 970" stroke="#454f5b" strokeWidth="4" />
        <path d="M600 110L715 140M375 902L493 933" stroke="#ffa3ad" strokeWidth="5" />
      </g>

      {/* left volute */}
      <g transform="translate(590 340) scale(.3333)">
        <path d="M403 150C290 260 235 500 205 800L245 865C330 780 400 500 402 380z" fill="url(#disk)" />
        <ShadedTube id="leftTube" d={leftTube} fill="#6189b8">
          <ellipse cx="148" cy="430" rx="32" ry="165" transform="rotate(12 148 430)" fill="#dcebff" opacity=".85" filter="url(#glow)" />
          <g stroke="#4c83bd" strokeWidth="2.500" opacity=".25">
            {leftRings.slice(5).map(r => <path key={r.join()} d={farArc(r)} />)}
          </g>
          <path d="M48 500C60 540 150 550 215 545M83 330C130 340 220 370 270 390M30 640C60 720 180 730 200 660" stroke="#4c83bd" strokeWidth="3" />
          <g stroke="#78b4f0" strokeWidth="4">
            {leftRings.map(r => <path key={r.join()} d={nearArc(r)} />)}
            <path d="M125 205C160 260 240 295 290 298M105 260C150 305 220 330 280 337M80 337C120 355 200 375 265 400M45 500C80 485 160 500 232 525M27 660C50 590 140 620 215 645M35 790C45 700 130 705 210 738M62 880C45 780 120 765 200 795M150 945C80 880 95 800 200 795M225 933C150 900 135 800 185 780" />
          </g>
        </ShadedTube>
        <path d="M403 150C310 240 225 470 232 705" stroke="#222b35" strokeWidth="4" />
        <path d="M340 200C250 350 200 600 195 800l18 10C215 600 250 400 352 215z" fill="#8fa9cd" opacity=".8" />
        <path d="M200 800q20 70 50 65l45-20-30-40z" fill="#5e7187" opacity=".9" />
        <ShadedTube id="frontRing" d={frontRing} fill="#4f80b4">
          <ellipse cx="388" cy="490" rx="22" ry="110" transform="rotate(16 388 490)" fill="#c4dcfb" opacity=".85" filter="url(#glow)" />
        </ShadedTube>
        <g stroke="#78b4f0" strokeWidth="4">
          <path d="M405 135C415 85 480 85 490 135M395 222C400 185 480 185 490 235M372 345C400 325 450 335 475 358M332 478C360 485 410 495 440 510M280 610C300 650 360 670 397 662M222 720C210 780 280 820 345 800M162 800C150 860 190 905 250 903M395 105C390 55 430 40 460 60M362 90C365 55 390 45 410 55M370 110C380 125 395 120 400 110" />
          <path d="M355 130l25 20-25 50-25 5M350 140l-15 60" strokeWidth="3" />
        </g>
        <path d="M190 795C220 770 280 790 345 800M230 710C280 700 330 710 370 725M400 240q40 20 80 20M285 610q50-10 115 20" stroke="#477db8" strokeWidth="3" />

        {/* outlet mouth */}
        <ellipse cx="526" cy="-363" rx="149" ry="98" transform="rotate(27.700 526 -363)" fill="#8ea4c5" />
        <g clipPath="url(#leftMouth)" stroke="#78b4f0" strokeWidth="4">
          <path d="M640-260q40-40 30-120L600-440q80 100 20 190z" fill="#8c9197" stroke="none" opacity=".4" filter="url(#soft)" />
          {[[-8, 21], [-20, 45], [-32, 74], [-50, 108], [-68, 152]].map(([dx, dy]) => (
            <ellipse key={dy} cx={526 + dx} cy={-363 + dy} rx="149" ry="98" transform={`rotate(27.700 ${526 + dx} ${-363 + dy})`} />
          ))}
        </g>
        <ellipse cx="526" cy="-363" rx="149" ry="98" transform="rotate(27.700 526 -363)" stroke="#78b4f0" strokeWidth="4" />
      </g>

      {/* right volute */}
      <g transform="translate(740 340) scale(.3333)">
        <ShadedTube id="bigTube" d={bigTube} fill="#6088b6" opacity={0.95}>
          <path d="M370 640v300M300 860q60 60 90 130M380 1000q60 60 20 200" stroke="#44678f" strokeWidth="4" opacity=".5" />
          <path d="M300 820l70-180v290l-90-20z" fill="#33506e" opacity=".3" />
          <g stroke="#4a80ba" strokeWidth="2.500" opacity=".2">
            {rightRings.slice(6).map(r => <path key={r.join()} d={farArc(r)} />)}
          </g>
          <g stroke="#78b4f0" strokeWidth="4">
            {rightRings.map(r => <path key={r.join()} d={nearArc(r)} />)}
            <path d="M225 950C210 1060 340 1180 520 1150M207 975C170 1080 310 1220 485 1195M190 1000C140 1110 280 1250 435 1237M160 1015C100 1130 240 1285 385 1268M160 970C90 1010 70 1080 95 1135 130 1220 220 1290 330 1286M90 955C70 980 60 1020 65 1050" />
          </g>
        </ShadedTube>
        <ellipse cx="710" cy="440" rx="260" ry="170" transform="rotate(29 710 440)" fill="#8ea5c6" opacity=".97" />
        <g clipPath="url(#rightMouth)" stroke="#78b4f0" strokeWidth="4">
          <path d="M440 240h172c0 130-30 240-75 300L480 480z" fill="#446f9f" stroke="none" opacity=".85" />
          <path d="M900 620q50-50 50-140L860 330q100 150 0 290z" fill="#8c9197" stroke="none" opacity=".4" filter="url(#soft)" />
          {[[-12, 25], [-26, 55], [-42, 88], [-62, 130], [-84, 176], [-112, 234]].map(([dx, dy]) => (
            <ellipse key={dy} cx={710 + dx} cy={440 + dy} rx="260" ry="170" transform={`rotate(29 ${710 + dx} ${440 + dy})`} />
          ))}
        </g>
        <ellipse cx="710" cy="440" rx="260" ry="170" transform="rotate(29 710 440)" stroke="#78b4f0" strokeWidth="4" />
      </g>
    </svg>
  )
}

function OrientationCube() {
  return (
    <svg viewBox="0 0 480 474" className="w-40 h-[158px]" fill="none" role="img" aria-label="Orientation cube">
      <path d="M183 133L127 215V345L183 243z" fill="#cdd3d0" />
      <path d="M183 133L330 172V282L183 243z" fill="#eef3ef" />
      <path d="M183 243L330 282 273 382 127 345z" fill="#f2faf6" />
      <path d="M183 133V243L127 345" stroke="#555" strokeWidth="7" />
      <path d="M183 243L328 281" stroke="#888" strokeWidth="8" />
      <path d="M329 172V282L273 382" stroke="#333" strokeWidth="4" />
      <path d="M127 345L273 382M160 205L130 275" stroke="#555" strokeWidth="3" strokeDasharray="3 7" />
      <path d="M104 230L152 244" stroke="#1818e0" strokeWidth="11" />
      <path d="M155 244L235 266" stroke="#b9bff0" strokeWidth="12" />
      <path d="M232 256l40 16-44 6z" fill="#b9bff0" />
      <path d="M106 222L152 138" stroke="#e80000" strokeWidth="11" />
      <path d="M167 112l1 34-24-14z" fill="#e80000" />
      <path d="M104 234V330" stroke="#00e010" strokeWidth="11" />
      <path d="M91 322h26l-13 30z" fill="#00e010" />
      <circle cx="103" cy="229" r="9" fill="#fff" />
      <text x="181" y="88" fontSize="32" fill="#f01818">X</text>
      <text x="104" y="381" fontSize="32" fill="#10e020">Y</text>
      <text x="301" y="284" fontSize="32" fill="#b9bff0">Z</text>
      <text transform="translate(297 200) rotate(193)" fontSize="28" fill="#444">LEFT</text>
      <text transform="translate(230 342) rotate(-62)" fontSize="26" fill="#333">TOP</text>
    </svg>
  )
}

function Viewport() {
  return (
    <main className="relative flex flex-col flex-1 min-w-0 bg-[#f6f6f4] overflow-hidden">
      <ModelDrawing />
      <div className="relative flex justify-center h-[30px] pr-[53px] shrink-0">
        <button aria-label="Collapse tree" className="absolute left-[6px] top-2">
          <svg viewBox="0 0 9 9" className="w-[9px] h-[9px]"><path d="M9 0v9L0 4.500z" fill="#333" /></svg>
        </button>
        <nav className="flex items-stretch bg-[#efefef] text-black text-[13px]">
          <button className="flex items-center gap-2 pl-[5px] pr-[7px]">
            <svg viewBox="0 0 22 16" className="w-[22px] h-4" stroke="#666" strokeWidth="1.200"><path d="M.6.6h7v14.800h-7z" fill="#c0c0ff" /><path d="M7.600.6h7v14.800h-7z" fill="#c0dfc0" /><path d="M14.600.6h6.800v14.800h-6.800z" fill="#e2c0c0" /></svg>
            Meridian
          </button>
          <button className="flex items-center gap-[7px] px-[5px] bg-[#ffeab6] border border-[#ffd04e]">
            <svg viewBox="0 0 20 22" className="w-5 h-[22px]"><path d="M10 0l9.500 5v11.500L10 22 .5 16.500V5z" fill="#5f5f5f" /><path d="M.5 5l9.500 5.500L19.500 5M10 10.500V22" fill="none" stroke="#ffeab6" strokeWidth="1.200" /></svg>
            3D Model
          </button>
          <button className="flex items-center gap-[14px] pl-[5px] pr-[14px]">
            <svg viewBox="0 0 22 18" className="w-[22px] h-[18px]" fill="#fff" stroke="#555"><path d="M.5.5h21v17H.5z" /><path d="M.5.5h21v5H.5z" fill="#d0d0d0" /><path d="M.5 9.500h21M.5 13.500h21M7.500 5.500v12M14.500 5.500v12" /></svg>
            Report
          </button>
        </nav>
      </div>
      <div className="relative flex items-end justify-between mt-auto">
        <OrientationCube />
        <div className="mr-1 mb-[3px] text-[11px] text-black">
          <div className="flex h-[10px] w-[118px] border border-black bg-white">
            <span className="w-7 bg-black" />
            <span className="w-7" />
            <span className="w-8 bg-black" />
          </div>
          <div className="flex justify-between w-[150px] leading-[14px]">
            <span className="pl-px">0</span>
            <span className="pl-[6px]">36.7</span>
            <span>73.5 mm</span>
          </div>
        </div>
      </div>
    </main>
  )
}

/* ---------- messages ---------- */

function Messages() {
  return (
    <aside className="flex w-[300px] shrink-0 bg-[#efefef] border-l-[3px] border-[#c0c0c0] text-black text-[12px]">
      <div className="flex flex-col flex-1 min-w-0">
        <div className="flex items-center h-[25px] pl-[7px] shrink-0 border-b border-[#a0a0a0] text-[#999] text-[11px] whitespace-nowrap">
          <button aria-label="Filter messages">
            <svg viewBox="0 0 12 12" className="w-3 h-3"><path d="M0 0h12v2L7.500 6.500V12h-3V6.500L0 2z" fill="#777" /></svg>
          </button>
          <button className="flex items-center gap-[5px] ml-[11px]">
            <svg viewBox="0 0 16 16" className="w-4 h-4" fill="none" stroke="#999"><rect x=".8" y=".8" width="14.400" height="14.400" rx="1" strokeWidth="1.500" /><path d="M6 6.500h2.500v5.500M5.500 12h5M7.500 3v2" strokeWidth="1.500" /></svg>
            Info (0)
          </button>
          <button className="flex items-center gap-1 ml-[15px]">
            <svg viewBox="0 0 18 18" className="w-[18px] h-[18px]"><path d="M9 1l8 15.500H1z" fill="#ececec" stroke="#999" strokeWidth="1.500" strokeLinejoin="round" /><path d="M9 5.500v6M9 13v2" stroke="#555" strokeWidth="2" /></svg>
            Warn (0)
          </button>
          <button className="flex items-center gap-1 ml-[10px]">
            <svg viewBox="0 0 16 16" className="w-4 h-4" fill="none" stroke="#999"><rect x=".8" y=".8" width="14.400" height="14.400" rx="1" strokeWidth="1.500" /><path d="M3.500 8h9" strokeWidth="1.600" /></svg>
            Error (0)
          </button>
        </div>
        <div className="mt-auto pl-[10px] pt-1 leading-[15px] border-t border-[#a0a0a0] text-[11px]">
          <p>Licensed for:</p>
          <p>TeAM SolidSQUAD-SSQ</p>
        </div>
      </div>
      <div className="flex flex-col items-center w-[27px] pt-1 pl-1">
        <span className="text-[11px] leading-[18px]">(0)</span>
        <svg viewBox="0 0 9 9" className="w-[9px] h-[9px] mt-4"><path d="M0 0l9 4.500L0 9z" fill="#000" /></svg>
        <button className="mt-[14px] [writing-mode:vertical-rl] rotate-180 font-['DejaVu_Sans_Mono','Liberation_Mono',monospace] text-[13px] leading-4">Messages</button>
      </div>
    </aside>
  )
}

export default function App() {
  return (
    <div className="flex flex-col h-screen overflow-hidden font-['Noto_Sans','Noto_Sans_CJK_TC',sans-serif] text-[12px] leading-4">
      <Header />
      <Ribbon />
      <div className="flex flex-1 min-h-0">
        <ComponentBar />
        <ModelTree />
        <div className="w-[3px] shrink-0 bg-[#c0c0c0]" />
        <Viewport />
        <Messages />
      </div>
    </div>
  )
}
